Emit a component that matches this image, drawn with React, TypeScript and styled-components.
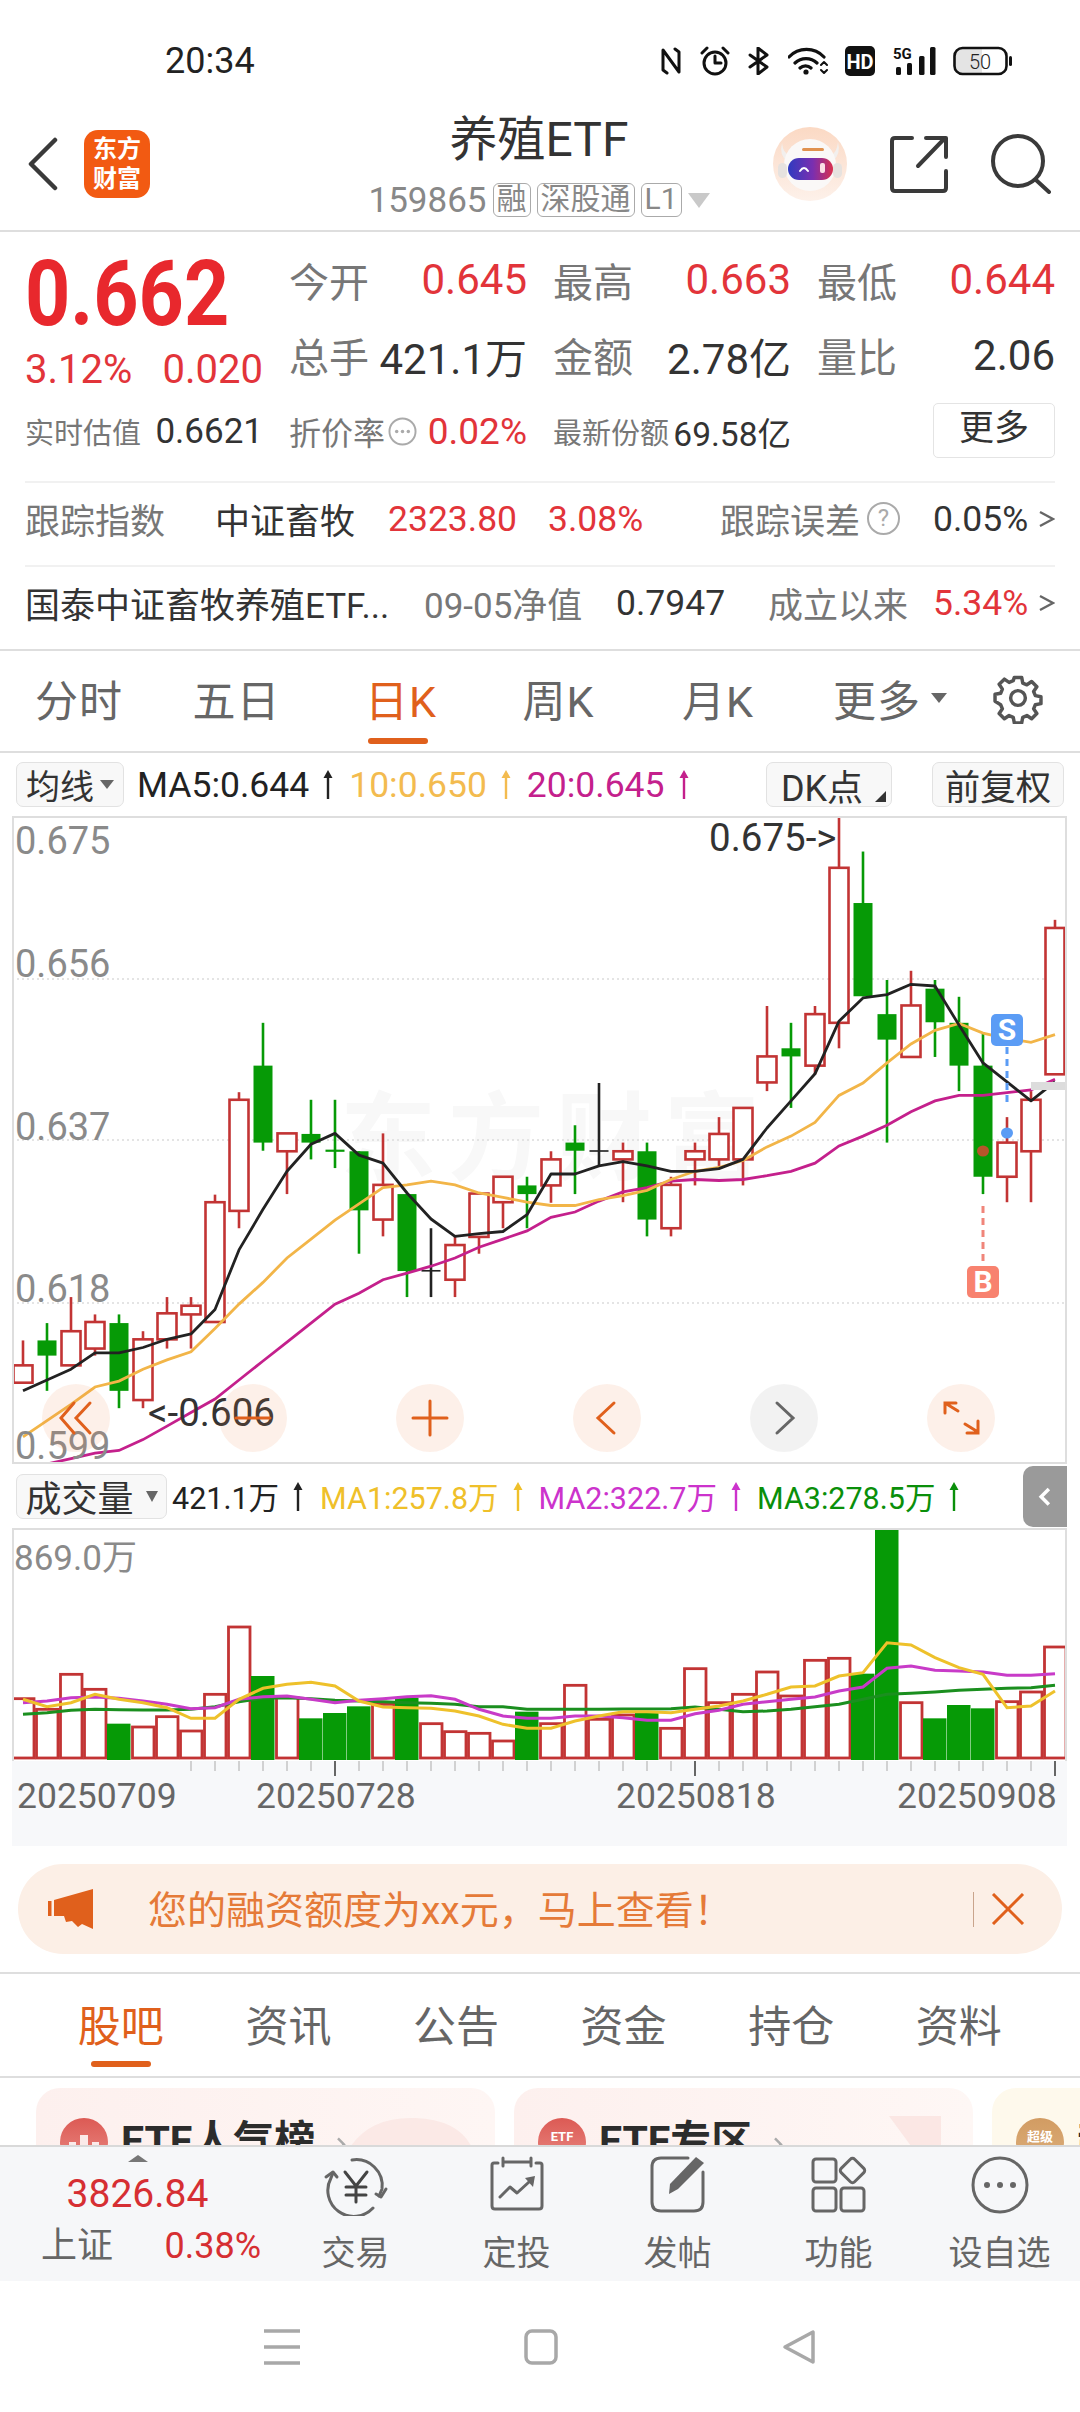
import React from "react";
import styled, { createGlobalStyle } from "styled-components";

const GlobalStyle = createGlobalStyle`
  html, body { margin: 0; padding: 0; background: #fff; }
  * { box-sizing: border-box; }
  body { font-family: Roboto, "Noto Sans CJK SC", sans-serif; }
`;

const RED = "#e2343a";
const ORANGE = "#e0601c";
const LINE = "#dedede";

const Page = styled.div`
  width: 1080px;
  height: 2412px;
  overflow: hidden;
  background: #fff;
  display: flex;
  flex-direction: column;
`;

/* ---------- status bar ---------- */
const StatusBar = styled.div`
  height: 105px;
  padding: 17px 68px 0 165px;
  display: flex;
  align-items: center;
  justify-content: space-between;
`;
const Clock = styled.span`
  font-size: 36px;
  color: #222;
`;
const StatusIcons = styled.div`
  display: flex;
  align-items: center;
  gap: 17.5px;
`;

/* ---------- nav bar ---------- */
const NavBar = styled.div`
  height: 127px;
  border-bottom: 2px solid ${LINE};
  display: grid;
  grid-template-columns: 1fr auto 1fr;
`;
const NavLeft = styled.div`
  display: flex;
  align-items: center;
  gap: 26px;
  padding: 0 0 8px 28px;
`;
const AppLogo = styled.div`
  width: 66px;
  height: 68px;
  border-radius: 14px;
  background: #f25a12;
  color: #fff;
  font-size: 24px;
  line-height: 30px;
  font-weight: 700;
  text-align: center;
  display: flex;
  align-items: center;
  justify-content: center;
`;
const NavCenter = styled.div`
  display: flex;
  flex-direction: column;
  align-items: center;
  padding-top: 6px;
  margin-right: 2px;
`;
const NavTitle = styled.div`
  font-size: 48px;
  line-height: 58px;
  color: #333;
`;
const NavSub = styled.div`
  margin-top: 13px;
  display: flex;
  align-items: center;
  gap: 6px;
  height: 36px;
  font-size: 35px;
  color: #888;
`;
const Tag = styled.span`
  height: 34px;
  padding: 0 3px;
  border: 1.5px solid #aaa;
  border-radius: 6px;
  font-size: 30px;
  line-height: 30px;
  color: #888;
`;
const Caret = styled.span<{ $w: number; $h: number; $color: string }>`
  display: inline-block;
  width: 0;
  height: 0;
  flex: none;
  border-left: ${(p) => p.$w / 2}px solid transparent;
  border-right: ${(p) => p.$w / 2}px solid transparent;
  border-top: ${(p) => p.$h}px solid ${(p) => p.$color};
`;
const NavRight = styled.div`
  display: flex;
  align-items: center;
  justify-content: flex-end;
  gap: 43px;
  padding: 0 29px 8px 0;
`;

/* ---------- quote ---------- */
const QuoteGrid = styled.div`
  height: 249px;
  padding: 10px 25px 0;
  display: grid;
  grid-template-columns: 264px 264px 264px 238px;
  grid-template-rows: 75px 76px 76px;
`;
const PriceBlock = styled.div`
  grid-row: 1 / span 2;
  display: flex;
  flex-direction: column;
  padding-top: 6px;
`;
const BigPrice = styled.div`
  font-size: 79px;
  line-height: 92px;
  font-weight: 700;
  color: #e8282d;
  transform: scaleY(1.14);
  transform-origin: left center;
`;
const PriceChange = styled.div`
  margin-top: 7px;
  width: 238px;
  display: flex;
  justify-content: space-between;
  font-size: 40px;
  line-height: 46px;
  color: ${RED};
`;
const Stat = styled.div`
  width: 238px;
  display: flex;
  align-items: center;
  justify-content: space-between;
`;
const StatLabel = styled.span`
  font-size: 40px;
  color: #777;
`;
const StatValue = styled.span<{ $red?: boolean }>`
  font-size: 42px;
  color: ${(p) => (p.$red ? RED : "#333")};
`;
const SmallCell = styled.div`
  width: 238px;
  display: flex;
  align-items: center;
  justify-content: space-between;
`;
const SmallLabel = styled.span<{ $size?: number }>`
  font-size: ${(p) => p.$size || 29}px;
  color: #777;
`;
const SmallValue = styled.span<{ $red?: boolean; $size?: number }>`
  font-size: ${(p) => p.$size || 35}px;
  color: ${(p) => (p.$red ? RED : "#333")};
`;
const InlineGroup = styled.span`
  display: flex;
  align-items: center;
  gap: 3px;
`;
const MoreWrap = styled.div`
  display: flex;
  justify-content: flex-end;
  align-items: flex-start;
  padding-top: 10px;
`;
const MoreButton = styled.div`
  width: 122px;
  height: 55px;
  border: 1.5px solid #e4e4e4;
  border-radius: 5px;
  font-size: 35px;
  line-height: 50px;
  text-align: center;
  color: #333;
`;

/* ---------- info rows ---------- */
const InfoRow = styled.div<{ $cols: string }>`
  height: 84px;
  margin: 0 25px;
  padding-bottom: 11px;
  border-top: 2px solid #f1f1f1;
  display: grid;
  grid-template-columns: ${(p) => p.$cols};
  align-items: center;
`;
const InfoText = styled.span<{ $color?: string; $size?: number }>`
  display: flex;
  align-items: center;
  gap: 7px;
  white-space: nowrap;
  font-size: ${(p) => p.$size || 35}px;
  color: ${(p) => p.$color || "#777"};
`;
const HelpDot = styled.span`
  width: 33px;
  height: 33px;
  border-radius: 50%;
  border: 2.5px solid #aaa;
  color: #aaa;
  font-size: 24px;
  line-height: 28px;
  text-align: center;
`;

/* ---------- period tabs ---------- */
const PeriodTabs = styled.div`
  height: 104px;
  border-top: 2px solid ${LINE};
  border-bottom: 2px solid ${LINE};
  display: grid;
  grid-template-columns: 158px 157px 172px 143px 176px 168px 1fr;
  align-items: center;
`;
const PeriodTab = styled.div<{ $active?: boolean }>`
  position: relative;
  display: flex;
  align-items: center;
  justify-content: center;
  gap: 10px;
  height: 100%;
  padding-bottom: 6px;
  font-size: 43px;
  letter-spacing: 1px;
  color: ${(p) => (p.$active ? ORANGE : "#666")};
  &::after {
    content: "";
    display: ${(p) => (p.$active ? "block" : "none")};
    position: absolute;
    left: 53px;
    bottom: 7px;
    width: 60px;
    height: 6px;
    border-radius: 3px;
    background: ${ORANGE};
  }
`;
const GearCell = styled.div`
  display: flex;
  justify-content: center;
  padding: 0 18px 6px 0;
`;

/* ---------- chart toolbars ---------- */
const ChartBar = styled.div<{ $h: number }>`
  height: ${(p) => p.$h}px;
  flex: none;
  padding: 0 16px;
  display: flex;
  align-items: center;
`;
const ToolButton = styled.div<{ $w: number; $after?: number; $size?: number; $gap?: number; $inset?: number }>`
  position: relative;
  width: ${(p) => p.$w}px;
  height: 45px;
  margin-right: ${(p) => p.$after || 0}px;
  padding-right: ${(p) => p.$inset || 0}px;
  flex: none;
  background: #f8f8f8;
  border: 1.5px solid #e2e2e2;
  border-radius: 7px;
  display: flex;
  align-items: center;
  justify-content: center;
  gap: ${(p) => p.$gap || 6}px;
  font-size: ${(p) => p.$size || 34}px;
  color: #333;
`;
const CornerMark = styled.span`
  position: absolute;
  right: 5px;
  bottom: 4px;
  width: 0;
  height: 0;
  border-left: 11px solid transparent;
  border-bottom: 11px solid #333;
`;
const Legend = styled.span<{ $color: string; $size: number; $gap: number }>`
  margin-right: ${(p) => p.$gap}px;
  display: flex;
  align-items: center;
  gap: 13px;
  white-space: nowrap;
  font-size: ${(p) => p.$size}px;
  color: ${(p) => p.$color};
`;
const Push = styled.span`
  flex: 1;
`;

/* ---------- chart canvases ---------- */
const ChartFrame = styled.div<{ $h: number }>`
  position: relative;
  margin: 0 12px;
  width: 1055px;
  height: ${(p) => p.$h}px;
  flex: none;
  border: 2px solid ${LINE};
  overflow: hidden;
`;
const OpenFrame = styled(ChartFrame)`
  border-bottom: none;
`;
const Canvas = styled.svg`
  position: absolute;
  left: -2px;
  top: -2px;
`;
const TickCanvas = styled.svg`
  position: absolute;
  left: 0;
  top: 0;
`;
const Watermark = styled.div`
  position: absolute;
  left: 326px;
  top: 266px;
  font-size: 96px;
  font-weight: 700;
  letter-spacing: 12px;
  line-height: 110px;
  white-space: nowrap;
  color: #f8f8f8;
`;
const ChartLabel = styled.span<{ $x: number; $y: number; $dark?: boolean; $size?: number }>`
  position: absolute;
  left: ${(p) => p.$x}px;
  top: ${(p) => p.$y}px;
  transform: translateY(-50%);
  white-space: nowrap;
  line-height: 1;
  font-size: ${(p) => p.$size || 38}px;
  color: ${(p) => (p.$dark ? "#333" : "#8a8a8a")};
`;
const TradeMark = styled.span<{ $x: number; $y: number; $color: string }>`
  position: absolute;
  left: ${(p) => p.$x}px;
  top: ${(p) => p.$y}px;
  width: 32px;
  height: 32px;
  border-radius: 5px;
  background: ${(p) => p.$color};
  color: #fff;
  font-size: 30px;
  font-weight: 700;
  line-height: 32px;
  text-align: center;
`;
const ChartControls = styled.div`
  position: absolute;
  left: 28px;
  bottom: 10px;
  width: 953px;
  display: flex;
  justify-content: space-between;
`;
const ControlCircle = styled.div<{ $grey?: boolean }>`
  width: 68px;
  height: 68px;
  border-radius: 50%;
  background: ${(p) => (p.$grey ? "rgba(0,0,0,0.05)" : "rgba(240,130,70,0.12)")};
  display: flex;
  align-items: center;
  justify-content: center;
`;
const CollapseTab = styled.div`
  width: 44px;
  height: 61px;
  flex: none;
  margin: 2px -3px 0 0;
  align-self: flex-start;
  background: #9a9a9a;
  border-radius: 10px 0 0 10px;
  display: flex;
  align-items: center;
  justify-content: center;
`;
const AxisBand = styled.div`
  position: relative;
  margin: 0 12px;
  width: 1055px;
  height: 85px;
  flex: none;
  background: #f7f8fa;
`;
const DateLabel = styled.span<{ $x: number }>`
  position: absolute;
  left: ${(p) => p.$x}px;
  top: 14px;
  font-size: 35.5px;
  color: #666;
`;

/* ---------- banner ---------- */
const Banner = styled.div`
  height: 90px;
  margin: 18px 18px 18px;
  flex: none;
  padding: 0 37px 0 30px;
  border-radius: 45px;
  background: #fcefe6;
  display: flex;
  align-items: center;
`;
const BannerText = styled.span`
  margin: 0 0 5px 55px;
  font-size: 39px;
  color: #e57a38;
  white-space: nowrap;
`;
const BannerSep = styled.span`
  margin-left: auto;
  width: 1px;
  height: 35px;
  background: #c9a48c;
`;
const BannerClose = styled.span`
  margin-left: 17px;
  display: flex;
`;

/* ---------- news tabs ---------- */
const NewsTabs = styled.div`
  height: 106px;
  flex: none;
  padding: 0 37px;
  border-top: 2px solid ${LINE};
  border-bottom: 2px solid ${LINE};
  display: grid;
  grid-template-columns: repeat(6, 167.6px);
`;
const NewsTab = styled.div<{ $active?: boolean }>`
  position: relative;
  display: flex;
  align-items: center;
  justify-content: center;
  padding-bottom: 5px;
  font-size: 43px;
  color: ${(p) => (p.$active ? ORANGE : "#666")};
  &::after {
    content: "";
    display: ${(p) => (p.$active ? "block" : "none")};
    position: absolute;
    left: 54px;
    bottom: 9px;
    width: 60px;
    height: 6px;
    border-radius: 3px;
    background: ${ORANGE};
  }
`;

/* ---------- promo cards (clipped by the bottom bar) ---------- */
const CardStrip = styled.div`
  height: 67px;
  flex: none;
  padding: 10px 0 0 36px;
  display: flex;
  gap: 19px;
  overflow: hidden;
`;
const PromoCard = styled.div<{ $bg: string; $w: number }>`
  position: relative;
  width: ${(p) => p.$w}px;
  height: 120px;
  flex: none;
  padding: 30px 0 0 24px;
  border-radius: 24px;
  background: ${(p) => p.$bg};
  display: flex;
  align-items: flex-start;
  gap: 13px;
`;
const CardBadge = styled.span<{ $from: string; $to: string }>`
  position: relative;
  width: 48px;
  height: 48px;
  flex: none;
  border-radius: 50%;
  background: linear-gradient(${(p) => p.$from}, ${(p) => p.$to});
  color: #fff;
  font-size: 13px;
  font-weight: 700;
  line-height: 38px;
  text-align: center;
  overflow: hidden;
`;
const CardTitle = styled.span`
  position: relative;
  margin-top: -3px;
  font-size: 41px;
  line-height: 52px;
  font-weight: 700;
  color: #2c2c2c;
  white-space: nowrap;
`;
const CardArrow = styled.span`
  position: relative;
  margin: 18px 0 0 6px;
  display: flex;
`;
const CardDecor = styled.svg<{ $right: number }>`
  position: absolute;
  right: ${(p) => p.$right}px;
  top: 28px;
`;

/* ---------- bottom bar ---------- */
const BottomBar = styled.div`
  height: 136px;
  flex: none;
  border-top: 2px solid #d9d9d9;
  background: #f6f7f9;
  display: grid;
  grid-template-columns: 275px repeat(5, 161px);
`;
const IndexCell = styled.div`
  display: flex;
  flex-direction: column;
  align-items: center;
  padding: 8px 0 0 0;
`;
const IndexCaret = styled.span`
  width: 0;
  height: 0;
  border-left: 10px solid transparent;
  border-right: 10px solid transparent;
  border-bottom: 7px solid #777;
`;
const IndexPrice = styled.div`
  margin-top: 9px;
  font-size: 39px;
  line-height: 46px;
  color: #d62f33;
`;
const IndexRow = styled.div`
  width: 220px;
  margin: 6px 0 0 41px;
  align-self: flex-start;
  display: flex;
  justify-content: space-between;
  align-items: center;
  font-size: 36px;
  line-height: 46px;
  color: #666;
`;
const IndexPct = styled.span`
  color: #d62f33;
`;
const ActionItem = styled.div`
  display: flex;
  flex-direction: column;
  align-items: center;
  padding-top: 9px;
  font-size: 34px;
  line-height: 46px;
  color: #666;
  svg {
    margin-bottom: 14px;
  }
`;

/* ---------- system nav ---------- */
const SystemNav = styled.div`
  flex: 1;
  display: flex;
  align-items: center;
  justify-content: center;
  gap: 224px;
`;

/* ---------- chart data, sampled from the source ---------- */
type Candle = ["r" | "g" | "k", number, number, number, number];

const candles: Candle[] = [
  ["r", 1272, 1318, 1350, 1350], ["g", 1240, 1272, 1300, 1365], ["r", 1192, 1255, 1318, 1318],
  ["r", 1224, 1238, 1287, 1300], ["g", 1224, 1240, 1365, 1397], ["r", 1255, 1270, 1382, 1397],
  ["r", 1192, 1222, 1270, 1287], ["r", 1192, 1208, 1224, 1287], ["r", 1003, 1017, 1238, 1238],
  ["r", 814, 828, 1033, 1065], ["g", 686, 765, 907, 922], ["r", 890, 890, 923, 1002],
  ["g", 828, 891, 907, 938], ["g", 828, 920, 924, 954], ["g", 923, 923, 1032, 1112],
  ["r", 890, 985, 1049, 1080], ["g", 1002, 1002, 1144, 1192], ["k", 1065, 1142, 1145, 1192],
  ["r", 1080, 1096, 1160, 1192], ["r", 1000, 1001, 1081, 1112], ["r", 970, 970, 1017, 1065],
  ["g", 970, 986, 1002, 1065], ["r", 923, 938, 986, 1018], ["g", 875, 907, 922, 1002],
  ["k", 797, 921, 924, 950], ["r", 907, 923, 938, 1017], ["g", 907, 923, 1049, 1080],
  ["r", 970, 985, 1065, 1080], ["r", 907, 923, 938, 986], ["r", 860, 891, 938, 950],
  ["r", 843, 843, 938, 986], ["r", 655, 748, 796, 812], ["g", 686, 733, 748, 843],
  ["r", 655, 670, 765, 781], ["r", 307, 400, 686, 733], ["g", 370, 465, 637, 637],
  ["g", 607, 670, 717, 907], ["r", 590, 654, 749, 749], ["g", 607, 623, 685, 749],
  ["g", 638, 686, 765, 812], ["g", 703, 765, 970, 1002], ["r", 860, 907, 970, 1017],
  ["r", 812, 828, 923, 1017], ["r", 496, 511, 781, 781],
];

const ma5 = [1365, 1345, 1325, 1295, 1295, 1285, 1270, 1260, 1215, 1105, 1030, 960, 910, 890, 930, 945, 1000, 1048, 1080, 1075, 1071, 1040, 965, 965, 950, 942, 950, 960, 960, 955, 938, 880, 830, 780, 683, 640, 634, 615, 618, 690, 760, 795, 830, 795];
const ma10 = [1450, 1420, 1390, 1358, 1347, 1325, 1308, 1293, 1250, 1205, 1165, 1120, 1085, 1050, 1020, 990, 985, 978, 985, 1000, 1008, 1017, 1023, 1023, 1012, 1005, 995, 975, 960, 953, 940, 915, 895, 870, 820, 797, 760, 725, 700, 687, 705, 715, 722, 708];
const ma20 = [1500, 1500, 1490, 1480, 1475, 1455, 1430, 1405, 1380, 1345, 1310, 1275, 1240, 1205, 1185, 1160, 1148, 1135, 1120, 1100, 1085, 1070, 1045, 1035, 1015, 998, 990, 978, 975, 977, 975, 968, 960, 945, 913, 895, 875, 850, 830, 820, 820, 815, 810, 790];

const volumes: ["r" | "g", number][] = [
  ["r", 773], ["r", 805], ["r", 700], ["r", 745], ["g", 848], ["r", 858], ["r", 827], ["r", 870], ["r", 760],
  ["r", 558], ["g", 705], ["r", 770], ["g", 832], ["g", 816], ["g", 796], ["r", 790], ["g", 770], ["r", 848],
  ["r", 872], ["r", 877], ["r", 900], ["g", 812], ["r", 848], ["r", 733], ["r", 835], ["r", 822], ["g", 816],
  ["r", 862], ["r", 683], ["r", 785], ["r", 760], ["r", 693], ["r", 765], ["r", 658], ["r", 652], ["g", 698],
  ["g", 263], ["r", 785], ["g", 832], ["g", 792], ["g", 802], ["r", 782], ["r", 753], ["r", 618],
];
const vol1 = [775, 797, 785, 760, 775, 785, 800, 832, 832, 775, 742, 730, 724, 735, 780, 798, 800, 802, 810, 825, 850, 862, 862, 840, 825, 812, 812, 815, 805, 795, 780, 760, 738, 735, 705, 695, 605, 612, 650, 680, 700, 800, 795, 750];
const vol2 = [785, 780, 770, 768, 772, 780, 790, 803, 800, 775, 767, 765, 775, 785, 778, 773, 767, 764, 775, 805, 825, 832, 832, 825, 825, 830, 838, 838, 818, 808, 790, 782, 775, 768, 750, 738, 682, 675, 688, 690, 693, 703, 703, 698];
const vol3 = [820, 815, 808, 805, 806, 807, 807, 805, 797, 782, 772, 770, 773, 778, 780, 782, 785, 787, 790, 797, 797, 805, 805, 805, 805, 804, 804, 803, 798, 805, 812, 810, 805, 797, 790, 775, 760, 757, 753, 748, 745, 742, 740, 733];

const colX = (i: number) => 23 + 24 * i;
const cy = (v: number) => 650 + v / 1.845;
const vy = (v: number) => 1440 + v / 3;
const toPoints = (values: number[], y: (v: number) => number) =>
  values.map((v, i) => `${colX(i)},${y(v).toFixed(1)}`).join(" ");

const CANDLE_COLOR = { r: "#c23434", g: "#069a06", k: "#222" };

function PriceChart() {
  return (
    <Canvas width={1055} height={648} viewBox="12 815 1055 648">
      {[978, 1139, 1302].map((y) => (
        <line key={y} x1={12} x2={1067} y1={y} y2={y} stroke="#dcdcdc" strokeWidth={1.5} strokeDasharray="2 3" />
      ))}
      {candles.map(([kind, hi, top, bot, lo], i) => {
        const x = colX(i);
        const color = CANDLE_COLOR[kind];
        return (
          <g key={i}>
            <line x1={x} x2={x} y1={cy(hi)} y2={cy(lo)} stroke={color} strokeWidth={2.6} />
            <rect
              x={x - 9.5}
              y={cy(top)}
              width={19}
              height={Math.max(cy(bot) - cy(top), 1.5)}
              fill={kind === "r" ? "#fff" : color}
              stroke={kind === "r" ? color : "none"}
              strokeWidth={2.6}
            />
          </g>
        );
      })}
      <polyline points={toPoints(ma20, cy)} fill="none" stroke="#c4208c" strokeWidth={2.8} />
      <polyline points={toPoints(ma10, cy)} fill="none" stroke="#f2b548" strokeWidth={2.8} />
      <polyline points={toPoints(ma5, cy)} fill="none" stroke="#222" strokeWidth={2.8} strokeLinejoin="round" />
      <line x1={1007} x2={1007} y1={1046} y2={1105} stroke="#5b9cf5" strokeWidth={3} strokeDasharray="7 5" />
      <ellipse cx={1007} cy={1132} rx={6} ry={5.5} fill="#5b9cf5" />
      <ellipse cx={983} cy={1150} rx={6} ry={5.5} fill="#b5562a" />
      <line x1={983} x2={983} y1={1205} y2={1264} stroke="#f0857a" strokeWidth={3} strokeDasharray="7 5" />
      <rect x={1031} y={1081} width={36} height={8} fill="#dcdcdc" />
    </Canvas>
  );
}

function VolumeChart() {
  return (
    <Canvas width={1055} height={233} viewBox="12 1527 1055 233">
      {volumes.map(([kind, top], i) => {
        const x = colX(i);
        const y = vy(top);
        return kind === "g" ? (
          <rect key={i} x={x - 12} y={y} width={23.5} height={1759 - y} fill={CANDLE_COLOR.g} />
        ) : (
          <rect key={i} x={x - 10.5} y={y} width={21.5} height={1757 - y} fill="#fff" stroke={CANDLE_COLOR.r} strokeWidth={2.8} />
        );
      })}
      <polyline points={toPoints(vol3, vy)} fill="none" stroke="#1b8f1f" strokeWidth={3} />
      <polyline points={toPoints(vol2, vy)} fill="none" stroke="#c83bc8" strokeWidth={3} />
      <polyline points={toPoints(vol1, vy)} fill="none" stroke="#eec12b" strokeWidth={3} />
    </Canvas>
  );
}

const minorTicks = Array.from({ length: 37 }, (_, i) => 179 + 24 * i);

function AxisTicks() {
  return (
    <TickCanvas width={1055} height={20} viewBox="12 1760 1055 20">
      {minorTicks.map((x) => (
        <line key={x} x1={x + 12} x2={x + 12} y1={1760} y2={1770} stroke="#c4c4c4" strokeWidth={1.5} />
      ))}
      {[335, 695, 1055].map((x) => (
        <line key={x} x1={x} x2={x} y1={1760} y2={1775} stroke="#666" strokeWidth={2} />
      ))}
    </TickCanvas>
  );
}

/* ---------- icons ---------- */
function UpArrow() {
  return (
    <svg width="12" height="29" viewBox="0 0 12 29" fill="currentColor">
      <path d="M6 0 L10.5 8 H7.2 V29 H4.8 V8 H1.5 Z" />
    </svg>
  );
}

function Chevron({ size = 18, color = "#666", dir = "right", width = 2.5 }: { size?: number; color?: string; dir?: "left" | "right"; width?: number }) {
  const d = dir === "right" ? "M6 3 L15 12 L6 21" : "M15 3 L6 12 L15 21";
  return (
    <svg width={size} height={size * 1.2} viewBox="0 0 21 24" fill="none" stroke={color} strokeWidth={width * (21 / size)}>
      <path d={d} />
    </svg>
  );
}

function RowArrow() {
  return (
    <svg width="18" height="18" viewBox="0 0 18 18" fill="none" stroke="#666" strokeWidth="2.4">
      <path d="M3 2 L16 9 L3 16" />
    </svg>
  );
}

function RankBars() {
  return (
    <svg width="48" height="48" viewBox="0 0 48 48" fill="#fff" fillOpacity="0.85">
      <rect x="9" y="24" width="7" height="14" />
      <rect x="20" y="17" width="8" height="21" />
      <rect x="32" y="24" width="7" height="14" />
    </svg>
  );
}

const stroke = { fill: "none", stroke: "#111", strokeLinecap: "round" as const, strokeLinejoin: "round" as const };

function StatusGlyphs() {
  return (
    <StatusIcons>
      <svg width="22" height="28" viewBox="0 0 22 28" {...stroke} strokeWidth={3}>
        <path d="M7 26 L3 23 V3 L19 25 V5 L15 2" />
      </svg>
      <svg width="30" height="30" viewBox="0 0 30 30" {...stroke} strokeWidth={3}>
        <circle cx="15" cy="17" r="11" />
        <path d="M15 10 V17 H21 M2 7 L7 2 M28 7 L23 2" />
      </svg>
      <svg width="23" height="28" viewBox="0 0 23 28" {...stroke} strokeWidth={3}>
        <path d="M3 8 L20 20 L11 27 V1 L20 8 L3 20" />
      </svg>
      <svg width="40" height="28" viewBox="0 0 40 28" {...stroke} strokeWidth={3.2}>
        <path d="M1 10 A24 24 0 0 1 36 10 M7 16 A16 16 0 0 1 29 16 M12 21 A8 8 0 0 1 23 21" />
        <circle cx="18" cy="25" r="2.6" fill="#111" stroke="none" />
        <path d="M33 18 L36 15 L39 18 M33 23 L36 26 L39 23" strokeWidth={2} />
      </svg>
      <svg width="30" height="30" viewBox="0 0 30 30">
        <rect width="30" height="30" rx="5" fill="#111" />
        <text x="15" y="22.5" textAnchor="middle" fontFamily="Roboto" fontWeight="700" fontSize="20" fill="#fff">HD</text>
      </svg>
      <svg width="43" height="30" viewBox="0 0 43 30">
        <text x="0" y="13" fontFamily="Roboto" fontWeight="700" fontSize="15" fill="#111">5G</text>
        <rect x="3" y="21" width="5" height="8" rx="1.5" fill="#111" />
        <rect x="14" y="17" width="5" height="12" rx="1.5" fill="#111" />
        <rect x="26" y="10" width="5.5" height="19" rx="1.5" fill="#111" />
        <rect x="37" y="1" width="5.5" height="28" rx="1.5" fill="#111" />
      </svg>
      <svg width="59" height="30" viewBox="0 0 59 30">
        <path d="M9 3 H29 V27 H9 A7 7 0 0 1 2 20 V10 A7 7 0 0 1 9 3 Z" fill="#e4e4e4" />
        <rect x="1.5" y="2" width="52" height="26" rx="8" fill="none" stroke="#111" strokeWidth="2.6" />
        <rect x="56" y="10" width="3" height="10" rx="1.5" fill="#111" />
        <text x="27" y="23" textAnchor="middle" fontFamily="Roboto" fontWeight="300" fontSize="20" fill="#222">50</text>
      </svg>
    </StatusIcons>
  );
}

function RobotAvatar() {
  return (
    <svg width="74" height="74" viewBox="0 0 74 74">
      <defs>
        <linearGradient id="avatarBg" x1="0" y1="0" x2="0" y2="1">
          <stop offset="0" stopColor="#fbd9c4" />
          <stop offset="1" stopColor="#fdf1ea" />
        </linearGradient>
        <linearGradient id="visor" x1="0" y1="0" x2="1" y2="0">
          <stop offset="0" stopColor="#2f3bc0" />
          <stop offset="0.55" stopColor="#7a2fb0" />
          <stop offset="1" stopColor="#d9304e" />
        </linearGradient>
      </defs>
      <circle cx="37" cy="37" r="37" fill="url(#avatarBg)" />
      <path d="M9 16 Q10 26 17 29 L14 34 Q6 28 9 16 Z M65 15 Q64 26 57 29 L60 34 Q68 27 65 15 Z" fill="#f2efed" />
      <circle cx="37" cy="38" r="26" fill="#faf8f7" />
      <rect x="5" y="36" width="9" height="15" rx="4.5" fill="#e6e2df" />
      <rect x="60" y="36" width="9" height="15" rx="4.5" fill="#e6e2df" />
      <rect x="29" y="21" width="22" height="3" rx="1.5" fill="#e0914f" />
      <rect x="15" y="31" width="45" height="22" rx="11" fill="url(#visor)" />
      <path d="M27 44 Q31 38 35 44" fill="none" stroke="#fff" strokeWidth="2" strokeLinecap="round" />
      <rect x="47" y="36" width="5" height="10" rx="2" fill="#fbdfe6" />
    </svg>
  );
}

function ShareIcon() {
  return (
    <svg width="58" height="58" viewBox="0 0 58 58" fill="none" stroke="#3a3a3a" strokeWidth="4" strokeLinecap="round" strokeLinejoin="round">
      <path d="M22 3 H5 Q2 3 2 6 V53 Q2 56 5 56 H53 Q56 56 56 53 V36" />
      <path d="M28 31 L55 3 M36 3 H56 V22" />
    </svg>
  );
}

function SearchIcon() {
  return (
    <svg width="60" height="60" viewBox="0 0 60 60" fill="none" stroke="#3a3a3a" strokeWidth="4" strokeLinecap="round">
      <circle cx="27" cy="27" r="25" />
      <path d="M45 46 L58 58" />
    </svg>
  );
}

function GearIcon() {
  return (
    <svg width="52" height="52" viewBox="0 0 24 24" fill="none" stroke="#555" strokeWidth="1.6" strokeLinejoin="round">
      <path d="M10.3 2.5h3.4l.5 2.6 1.9.8 2.2-1.5 2.4 2.4-1.5 2.2.8 1.9 2.6.5v3.2l-2.6.5-.8 1.9 1.5 2.2-2.4 2.4-2.2-1.5-1.9.8-.5 2.6h-3.4l-.5-2.6-1.9-.8-2.2 1.5-2.4-2.4 1.5-2.2-.8-1.9L1.4 13.5v-3.2l2.6-.5.8-1.9-1.5-2.2 2.4-2.4 2.2 1.5 1.9-.8z" />
      <circle cx="12" cy="12" r="3.4" />
    </svg>
  );
}

function DotsRing({ size, color }: { size: number; color: string }) {
  return (
    <svg width={size} height={size} viewBox="0 0 30 30" fill="none" stroke={color} strokeWidth="2">
      <circle cx="15" cy="15" r="13.5" />
      <g fill={color} stroke="none">
        <circle cx="9" cy="15" r="1.8" />
        <circle cx="15" cy="15" r="1.8" />
        <circle cx="21" cy="15" r="1.8" />
      </g>
    </svg>
  );
}

const orangeStroke = { fill: "none", stroke: ORANGE, strokeWidth: 3, strokeLinecap: "round" as const };

function ControlIcon({ name }: { name: string }) {
  const box = { width: 40, height: 40, viewBox: "0 0 40 40" };
  if (name === "double") {
    return (
      <svg {...box} {...orangeStroke}>
        <path d="M18 5 L5 20 L18 35 M34 5 L20 20 L34 35" />
      </svg>
    );
  }
  if (name === "minus") {
    return (
      <svg {...box} {...orangeStroke}>
        <path d="M3 20 H37" />
      </svg>
    );
  }
  if (name === "plus") {
    return (
      <svg {...box} {...orangeStroke}>
        <path d="M3 20 H37 M20 3 V37" />
      </svg>
    );
  }
  if (name === "left") {
    return (
      <svg {...box} {...orangeStroke}>
        <path d="M27 5 L11 20 L27 35" />
      </svg>
    );
  }
  if (name === "right") {
    return (
      <svg {...box} {...orangeStroke} stroke="#666">
        <path d="M13 5 L29 20 L13 35" />
      </svg>
    );
  }
  return (
    <svg {...box} {...orangeStroke}>
      <path d="M4 5 L17 13 M4 15 V5 H15 M24 26 L37 34 M37 23 V35 H26" />
    </svg>
  );
}

function SpeakerIcon() {
  return (
    <svg width="45" height="40" viewBox="0 0 45 40" fill={ORANGE}>
      <rect x="0" y="12" width="3.5" height="15" />
      <path d="M6 11 L45 0 V40 L34 35 L30 38 L24 32 L18 33 L16 27 H6 Z" />
    </svg>
  );
}

const actionStroke = { fill: "none", stroke: "#666", strokeWidth: 3, strokeLinecap: "round" as const, strokeLinejoin: "round" as const };

function TradeIcon() {
  return (
    <svg width="66" height="60" viewBox="0 0 66 60" {...actionStroke}>
      <path d="M29 4 A26 26 0 0 1 59 33 L56 40" />
      <path d="M63 33 L58 41 L53 38" />
      <path d="M50 52 A26 26 0 0 1 8 22 L10 17" />
      <path d="M3 21 L10 16 L14 21" />
      <path d="M22 16 L33 30 L44 16 M23 31 H43 M23 39 H43 M33 30 V46" stroke="#444" />
    </svg>
  );
}

function PlanIcon() {
  return (
    <svg width="56" height="60" viewBox="0 0 56 60" {...actionStroke}>
      <path d="M9 7 H5 Q3 7 3 9 V50 Q3 53 6 53 H50 Q53 53 53 50 V9 Q53 7 51 7 H47" />
      <path d="M14 2 V10 M42 2 V10 M14 6 H42" />
      <path d="M11 41 L21 31 L28 37 L40 26" />
      <path d="M36 22 L46 20 L44 31 Z" fill="#666" stroke="none" />
    </svg>
  );
}

function EditIcon() {
  return (
    <svg width="56" height="60" viewBox="0 0 56 60" {...actionStroke}>
      <path d="M38 2 H11 Q2 2 2 11 V46 Q2 55 11 55 H44 Q53 55 53 46 V16" />
      <path d="M19 38 L20 28 L46 1 L54 7 L28 33 Z" fill="#666" stroke="none" />
    </svg>
  );
}

function GridIcon() {
  return (
    <svg width="56" height="60" viewBox="0 0 56 60" {...actionStroke}>
      <rect x="2" y="3" width="23" height="23" rx="3" />
      <rect x="2" y="32" width="23" height="23" rx="3" />
      <rect x="30" y="32" width="23" height="23" rx="3" />
      <rect x="32" y="5" width="19" height="19" rx="3" transform="rotate(45 41.5 14.5)" />
    </svg>
  );
}

function RingIcon() {
  return (
    <svg width="60" height="60" viewBox="0 0 60 60" {...actionStroke}>
      <circle cx="30" cy="29" r="27" />
      <g fill="#666" stroke="none">
        <circle cx="17" cy="29" r="3" />
        <circle cx="30" cy="29" r="3" />
        <circle cx="43" cy="29" r="3" />
      </g>
    </svg>
  );
}

function SystemNavIcons() {
  const common = { fill: "none", stroke: "#a8a8a8", strokeWidth: 3.5, strokeLinejoin: "round" as const };
  return (
    <SystemNav>
      <svg width="36" height="36" viewBox="0 0 36 36" {...common}>
        <path d="M0 2 H36 M0 18 H36 M0 34 H36" />
      </svg>
      <svg width="34" height="36" viewBox="0 0 34 36" {...common}>
        <rect x="2" y="2" width="30" height="32" rx="6" />
      </svg>
      <svg width="34" height="36" viewBox="0 0 34 36" {...common}>
        <path d="M31 3 V33 L3 18 Z" />
      </svg>
    </SystemNav>
  );
}

const priceLabels: [string, number][] = [
  ["0.675", 23],
  ["0.656", 146],
  ["0.637", 309],
  ["0.618", 471],
  ["0.599", 628],
];

const controls = ["double", "minus", "plus", "left", "right", "expand"];

export default function App() {
  return (
    <Page>
      <GlobalStyle />
      <StatusBar>
        <Clock>20:34</Clock>
        <StatusGlyphs />
      </StatusBar>

      <NavBar>
        <NavLeft>
          <svg width="30" height="54" viewBox="0 0 30 54" fill="none" stroke="#3a3a3a" strokeWidth="4.5" strokeLinecap="round" strokeLinejoin="round">
            <path d="M27 3 L3 27 L27 51" />
          </svg>
          <AppLogo>东方<br />财富</AppLogo>
        </NavLeft>
        <NavCenter>
          <NavTitle>养殖ETF</NavTitle>
          <NavSub>
            <span>159865</span>
            <Tag>融</Tag>
            <Tag>深股通</Tag>
            <Tag>L1</Tag>
            <Caret $w={22} $h={15} $color="#c9c9c9" />
          </NavSub>
        </NavCenter>
        <NavRight>
          <RobotAvatar />
          <ShareIcon />
          <SearchIcon />
        </NavRight>
      </NavBar>

      <QuoteGrid>
        <PriceBlock>
          <BigPrice>0.662</BigPrice>
          <PriceChange>
            <span>3.12%</span>
            <span>0.020</span>
          </PriceChange>
        </PriceBlock>
        <Stat><StatLabel>今开</StatLabel><StatValue $red>0.645</StatValue></Stat>
        <Stat><StatLabel>最高</StatLabel><StatValue $red>0.663</StatValue></Stat>
        <Stat><StatLabel>最低</StatLabel><StatValue $red>0.644</StatValue></Stat>
        <Stat><StatLabel>总手</StatLabel><StatValue>421.1万</StatValue></Stat>
        <Stat><StatLabel>金额</StatLabel><StatValue>2.78亿</StatValue></Stat>
        <Stat><StatLabel>量比</StatLabel><StatValue>2.06</StatValue></Stat>
        <SmallCell>
          <SmallLabel>实时估值</SmallLabel>
          <SmallValue>0.6621</SmallValue>
        </SmallCell>
        <SmallCell>
          <InlineGroup>
            <SmallLabel $size={32}>折价率</SmallLabel>
            <DotsRing size={29} color="#aaa" />
          </InlineGroup>
          <SmallValue $red $size={37}>0.02%</SmallValue>
        </SmallCell>
        <SmallCell>
          <SmallLabel>最新份额</SmallLabel>
          <SmallValue $size={33.5}>69.58亿</SmallValue>
        </SmallCell>
        <MoreWrap><MoreButton>更多</MoreButton></MoreWrap>
      </QuoteGrid>

      <InfoRow $cols="190px 173px 160px 172px 213px 104px 18px">
        <InfoText>跟踪指数</InfoText>
        <InfoText $color="#333">中证畜牧</InfoText>
        <InfoText $color={RED} $size={35.5}>2323.80</InfoText>
        <InfoText $color={RED} $size={35.5}>3.08%</InfoText>
        <InfoText>跟踪误差<HelpDot>?</HelpDot></InfoText>
        <InfoText $color="#333" $size={35.5}>0.05%</InfoText>
        <RowArrow />
      </InfoRow>
      <InfoRow $cols="399px 192px 152px 165px 104px 18px">
        <InfoText $color="#333">国泰中证畜牧养殖ETF...</InfoText>
        <InfoText>09-05净值</InfoText>
        <InfoText $color="#333" $size={35.5}>0.7947</InfoText>
        <InfoText>成立以来</InfoText>
        <InfoText $color={RED} $size={35.5}>5.34%</InfoText>
        <RowArrow />
      </InfoRow>

      <PeriodTabs>
        <PeriodTab>分时</PeriodTab>
        <PeriodTab>五日</PeriodTab>
        <PeriodTab $active>日K</PeriodTab>
        <PeriodTab>周K</PeriodTab>
        <PeriodTab>月K</PeriodTab>
        <PeriodTab>更多<Caret $w={16} $h={10} $color="#666" /></PeriodTab>
        <GearCell><GearIcon /></GearCell>
      </PeriodTabs>

      <ChartBar $h={63}>
        <ToolButton $w={108} $after={13}>
          均线<Caret $w={15} $h={9} $color="#666" />
        </ToolButton>
        <Legend $color="#222" $size={35.5} $gap={15}>MA5:0.644<UpArrow /></Legend>
        <Legend $color="#f3bb4f" $size={35.5} $gap={15}>10:0.650<UpArrow /></Legend>
        <Legend $color="#c4208c" $size={35.5} $gap={15}>20:0.645<UpArrow /></Legend>
        <Push />
        <ToolButton $w={126} $after={40} $size={36} $inset={14}>DK点<CornerMark /></ToolButton>
        <ToolButton $w={132} $size={35.5}>前复权</ToolButton>
      </ChartBar>

      <ChartFrame $h={648}>
        <Watermark>东方财富</Watermark>
        <PriceChart />
        {priceLabels.map(([text, y]) => (
          <ChartLabel key={text} $x={1} $y={y}>{text}</ChartLabel>
        ))}
        <ChartLabel $x={695} $y={20} $dark $size={38.5}>0.675-&gt;</ChartLabel>
        <ChartLabel $x={134} $y={595} $dark $size={38.5}>&lt;-0.606</ChartLabel>
        <TradeMark $x={977} $y={196} $color="#5b9cf5">S</TradeMark>
        <TradeMark $x={953} $y={448} $color="#f8826f">B</TradeMark>
        <ChartControls>
          {controls.map((name) => (
            <ControlCircle key={name} $grey={name === "right"}>
              <ControlIcon name={name} />
            </ControlCircle>
          ))}
        </ChartControls>
      </ChartFrame>

      <ChartBar $h={64}>
        <ToolButton $w={151} $after={5} $size={36} $gap={12}>
          成交量<Caret $w={13} $h={11} $color="#666" />
        </ToolButton>
        <Legend $color="#222" $size={30.5} $gap={16}>421.1万<UpArrow /></Legend>
        <Legend $color="#efc02a" $size={30.5} $gap={15}>MA1:257.8万<UpArrow /></Legend>
        <Legend $color="#cc33cc" $size={30.5} $gap={15}>MA2:322.7万<UpArrow /></Legend>
        <Legend $color="#0a8f0a" $size={30.5} $gap={15}>MA3:278.5万<UpArrow /></Legend>
        <Push />
        <CollapseTab><Chevron size={18} dir="left" color="#fff" width={3.5} /></CollapseTab>
      </ChartBar>

      <OpenFrame $h={233}>
        <VolumeChart />
        <ChartLabel $x={0} $y={28} $size={35}>869.0万</ChartLabel>
      </OpenFrame>

      <AxisBand>
        <AxisTicks />
        <DateLabel $x={5}>20250709</DateLabel>
        <DateLabel $x={244}>20250728</DateLabel>
        <DateLabel $x={604}>20250818</DateLabel>
        <DateLabel $x={885}>20250908</DateLabel>
      </AxisBand>

      <Banner>
        <SpeakerIcon />
        <BannerText>您的融资额度为xx元，马上查看！</BannerText>
        <BannerSep />
        <BannerClose>
          <svg width="34" height="32" viewBox="0 0 34 32" fill="none" stroke={ORANGE} strokeWidth="3">
            <path d="M2 1 L32 31 M32 1 L2 31" />
          </svg>
        </BannerClose>
      </Banner>

      <NewsTabs>
        <NewsTab $active>股吧</NewsTab>
        <NewsTab>资讯</NewsTab>
        <NewsTab>公告</NewsTab>
        <NewsTab>资金</NewsTab>
        <NewsTab>持仓</NewsTab>
        <NewsTab>资料</NewsTab>
      </NewsTabs>

      <CardStrip>
        <PromoCard $w={459} $bg="linear-gradient(90deg, #fdf0ee, #fef6f4)">
          <CardDecor $right={20} width="130" height="40" viewBox="0 0 130 40">
            <path d="M0 40 Q20 0 70 2 Q120 4 130 40 Z" fill="#fbe9e6" />
          </CardDecor>
          <CardBadge $from="#dc5a54" $to="#e98a84"><RankBars /></CardBadge>
          <CardTitle>ETF人气榜</CardTitle>
          <CardArrow><Chevron size={14} color="#aaa" /></CardArrow>
        </PromoCard>
        <PromoCard $w={459} $bg="linear-gradient(90deg, #fdf0ee, #fef7f5)">
          <CardBadge $from="#dc5a54" $to="#e98a84">ETF</CardBadge>
          <CardTitle>ETF专区</CardTitle>
          <CardArrow><Chevron size={14} color="#aaa" /></CardArrow>
          <CardDecor $right={32} width="52" height="30" viewBox="0 0 52 30">
            <path d="M0 0 H52 V30 H22 Z" fill="#fbe7e4" />
          </CardDecor>
        </PromoCard>
        <PromoCard $w={200} $bg="#fef9ec">
          <CardBadge $from="#d29c62" $to="#dcae7c">超级</CardBadge>
          <CardTitle>超级</CardTitle>
        </PromoCard>
      </CardStrip>

      <BottomBar>
        <IndexCell>
          <IndexCaret />
          <IndexPrice>3826.84</IndexPrice>
          <IndexRow>
            <span>上证</span>
            <IndexPct>0.38%</IndexPct>
          </IndexRow>
        </IndexCell>
        <ActionItem><TradeIcon />交易</ActionItem>
        <ActionItem><PlanIcon />定投</ActionItem>
        <ActionItem><EditIcon />发帖</ActionItem>
        <ActionItem><GridIcon />功能</ActionItem>
        <ActionItem><RingIcon />设自选</ActionItem>
      </BottomBar>

      <SystemNavIcons />
    </Page>
  );
}
